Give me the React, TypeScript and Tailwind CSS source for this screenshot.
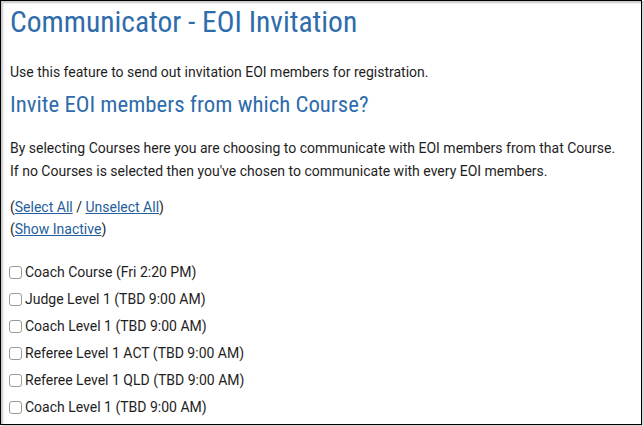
const courses = [
  "Coach Course (Fri 2:20 PM)",
  "Judge Level 1 (TBD 9:00 AM)",
  "Coach Level 1 (TBD 9:00 AM)",
  "Referee Level 1 ACT (TBD 9:00 AM)",
  "Referee Level 1 QLD (TBD 9:00 AM)",
  "Coach Level 1 (TBD 9:00 AM)",
];

export default function App() {
  return (
    <div className="h-[426px] w-[644px] overflow-hidden bg-white font-['Roboto',sans-serif] text-[#1e1e1e]">
      <div className="h-[425px] w-[642px] overflow-hidden border border-black pl-[9px] pt-[3px] shadow-[inset_2px_2px_2px_#c8c8c8,2px_1px_0_#d6d6d6]">
        <h1 className="font-['Roboto_Condensed','Roboto',sans-serif] text-[29.5px] leading-[36px] text-[#2f6cab]">
          Communicator - EOI Invitation
        </h1>
        <p className="mt-[22px] text-[14px] leading-[20px]">
          Use this feature to send out invitation EOI members for registration.
        </p>
        <h2 className="mt-[9px] font-['Roboto_Condensed','Roboto',sans-serif] text-[22.8px] leading-[28px] text-[#2f6cab]">
          Invite EOI members from which Course?
        </h2>
        <p className="mt-[18px] text-[14px] leading-[23px]">
          By selecting Courses here you are choosing to communicate with EOI members from that Course.
          <br />
          If no Courses is selected then you've chosen to communicate with every EOI members.
        </p>
        <div className="mt-[13px] text-[14px] leading-[22px]">
          <div>
            (<a href="#" className="text-[#265e9c] underline">Select All</a> /{" "}
            <a href="#" className="text-[#265e9c] underline">Unselect All</a>)
          </div>
          <div>
            (<a href="#" className="text-[#265e9c] underline">Show Inactive</a>)
          </div>
        </div>
        <ul className="mt-[22px] flex flex-col gap-[7.2px] text-[14px]">
          {courses.map((c, i) => (
            <li key={i} className="flex h-[20px] items-center gap-[3px]">
              <span className="-ml-[1px] h-[13px] w-[13px] rounded-[3px] border border-[#9a9a9a] bg-white" />
              <span>{c}</span>
            </li>
          ))}
        </ul>
      </div>
    </div>
  );
}
